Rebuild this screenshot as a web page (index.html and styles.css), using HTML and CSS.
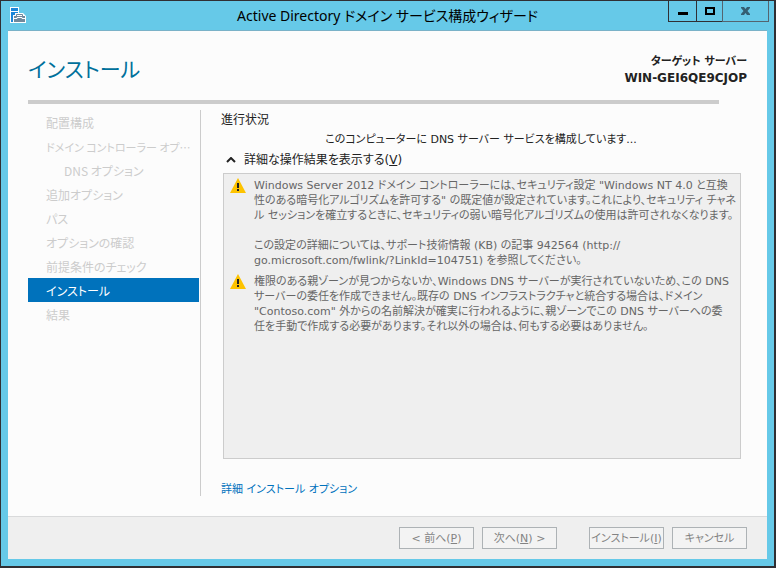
FILE: index.html
```html
<!doctype html>
<html lang="ja">
<head>
  <meta charset="utf-8">
  <title>Active Directory ドメイン サービス構成ウィザード</title>
  <link rel="stylesheet" href="styles.css">
</head>

<body>
  <div class="window">
    <header class="titlebar">
      <svg class="app-icon" width="16" height="16" viewBox="0 0 16 16">
        <path fill="#fff" d="M0 0h9v6h4l3 3v7H0z"/>
        <path fill="#1c86d8" d="M1 1h7v3H1zM1 5h7v1H5v2H3v7H1z"/>
        <path fill="#71899c" d="M4 9h11v6H4z"/>
        <path fill="none" stroke="#71899c" d="M6.500 9V7.500h6V9"/>
        <path fill="none" stroke="#fff" d="M4 11.500h3v-1h5v1h3"/>
      </svg>
      <h1 class="title">Active Directory ドメイン サービス構成ウィザード</h1>
      <div class="controls">
        <button class="control" aria-label="最小化">
          <svg width="10" height="10"><path d="M0 6h10v3H0z"/></svg>
        </button>
        <button class="control max" aria-label="最大化">
          <svg width="10" height="10"><path fill="none" stroke="#000" stroke-width="2" d="M1 2h8v6H1z"/></svg>
        </button>
        <button class="control close" aria-label="閉じる">
          <svg width="9" height="8"><path fill="#345f73" d="M0 0h3l1.500 2L6 0h3v1L6.500 4 9 7v1H6L4.500 6 3 8H0V7l2.500-3L0 1z"/></svg>
        </button>
      </div>
    </header>

    <div class="client">
      <div class="heading">
        <h2>インストール</h2>
        <div class="target">ターゲット サーバー<br><span class="server">WIN-GEI6QE9CJOP</span></div>
      </div>
      <div class="rule"></div>

      <div class="body">
        <nav class="steps">
          <ul>
            <li>配置構成</li>
            <li class="long">ドメイン コントローラー オプ…</li>
            <li class="sub">DNS オプション</li>
            <li>追加オプション</li>
            <li>パス</li>
            <li>オプションの確認</li>
            <li>前提条件のチェック</li>
            <li class="current">インストール</li>
            <li>結果</li>
          </ul>
        </nav>

        <main class="progress">
          <h3>進行状況</h3>
          <p class="status">このコンピューターに DNS サーバー サービスを構成しています...</p>
          <button class="toggle">
            <svg width="10" height="6" viewBox="0 0 10 6"><path fill="none" stroke="#222" stroke-width="2" d="M1 5l4-4 4 4"/></svg>
            <span>詳細な操作結果を表示する(<u>V</u>)</span>
          </button>

          <div class="results">
            <div class="message">
              <svg class="warning" width="16" height="16" viewBox="0 0 16 16">
                <path fill="#fdc300" d="M8 0l8 15H0z"/>
                <path fill="#222" d="M7 5h2v5H7zM7 11h2v2H7z"/>
              </svg>
              <p>Windows Server 2012 ドメイン コントローラーには、セキュリティ設定 "Windows NT 4.0 と互換<br>
              性のある暗号化アルゴリズムを許可する" の既定値が設定されています。これにより、セキュリティ チャネ<br>
              ル セッションを確立するときに、セキュリティの弱い暗号化アルゴリズムの使用は許可されなくなります。<br>
              <br>
              この設定の詳細については、サポート技術情報 (KB) の記事 942564 (http://<br>
              go.microsoft.com/fwlink/?LinkId=104751) を参照してください。</p>
            </div>
            <div class="message">
              <svg class="warning" width="16" height="16" viewBox="0 0 16 16">
                <path fill="#fdc300" d="M8 0l8 15H0z"/>
                <path fill="#222" d="M7 5h2v5H7zM7 11h2v2H7z"/>
              </svg>
              <p>権限のある親ゾーンが見つからないか、Windows DNS サーバーが実行されていないため、この DNS<br>
              サーバーの委任を作成できません。既存の DNS インフラストラクチャと統合する場合は、ドメイン<br>
              "Contoso.com" 外からの名前解決が確実に行われるように、親ゾーンでこの DNS サーバーへの委<br>
              任を手動で作成する必要があります。それ以外の場合は、何もする必要はありません。</p>
            </div>
          </div>

          <a class="more" href="#">詳細 インストール オプション</a>
        </main>
      </div>

      <footer class="buttons">
        <button disabled>&lt; 前へ(<u>P</u>)</button>
        <button disabled>次へ(<u>N</u>) &gt;</button>
        <button class="install" disabled>インストール(<u>I</u>)</button>
        <button disabled>キャンセル</button>
      </footer>
    </div>
  </div>
</body>

</html>
```

FILE: styles.css
```css
* {
  box-sizing: border-box;
}
body {
  margin: 0;
  font-family: "DejaVu Sans", "Noto Sans CJK JP", sans-serif;
  font-feature-settings: "palt";
  font-size: 11px;
  line-height: 16px;
  color: #222;
}
h1, h2, h3, p, ul {
  margin: 0;
  padding: 0;
  font-size: inherit;
  font-weight: normal;
}
button {
  font: inherit;
  font-feature-settings: inherit;
  color: inherit;
  padding: 0;
}
svg {
  display: block;
  flex: none;
}

.window {
  display: flex;
  flex-direction: column;
  min-height: 100vh;
  padding: 0 7px 7px;
  background: #66c9e8;
  border: 1px solid #302f33;
  border-right-width: 2px;
  border-bottom-width: 2px;
}

/* title bar */
.titlebar {
  display: grid;
  grid-template-columns: 100px 1fr 100px;
  height: 29px;
}
.app-icon {
  margin: 6px 0 0 2px;
}
.title {
  font-family: "Noto Sans", "Noto Sans CJK JP", sans-serif;
  font-size: 14px;
  line-height: 30px;
  text-align: center;
  color: #000;
  white-space: nowrap;
}
.controls {
  display: flex;
  justify-content: flex-end;
  height: 21px;
  margin-right: -2px;
}
.control {
  display: flex;
  align-items: center;
  justify-content: center;
  width: 28px;
  background: none;
  border: 1px solid #302f33;
  border-top: none;
  border-right: none;
}
.control.max {
  width: 26px;
}
.control.close {
  width: 47px;
  border-color: #54646f;
  border-right: 1px solid #54646f;
}

/* wizard page */
.client {
  display: flex;
  flex-direction: column;
  flex: 1;
  background: #fcfcfc;
  border-top: 1px solid #7ab2c8;
}
.heading {
  display: flex;
  justify-content: space-between;
  padding: 20px 20px 0;
  height: 69px;
}
.heading h2 {
  font-size: 21px;
  line-height: 38px;
  color: #00709b;
}
.target {
  padding-top: 3px;
  font-weight: bold;
  text-align: right;
}
.server {
  font-size: 12px;
}
.rule {
  height: 4px;
  margin: 0 48px 0 20px;
  background: #ccc;
}
.body {
  display: flex;
  flex: 1;
  padding: 6px 26px 20px 20px;
}

.steps {
  flex: none;
  width: 173px;
  padding-right: 1px;
  border-right: 1px solid #ccc;
}
.steps ul {
  list-style: none;
}
.steps li {
  height: 24px;
  padding-left: 18px;
  font-family: "Noto Sans CJK JP", sans-serif;
  font-size: 12px;
  line-height: 26px;
  color: #ccc;
  white-space: nowrap;
}
.steps .long {
  font-size: 11px;
}
.steps .sub {
  padding-left: 36px;
}
.steps .current {
  background: #0072bc;
  color: #fff;
}

.progress {
  display: flex;
  flex-direction: column;
  flex: 1;
  min-width: 0;
  padding: 2px 0 0 20px;
}
.progress h3 {
  font-size: 12px;
}
.status {
  padding-top: 4px;
  text-align: center;
}
.toggle {
  display: flex;
  align-items: center;
  gap: 8px;
  margin: 4px 0 5px;
  padding-left: 5px;
  background: none;
  border: none;
  font-size: 12px;
}
.results {
  flex: 1;
  margin-left: 2px;
  padding: 4px 6px;
  background: #efefef;
  border: 1px solid #ccc;
  color: #666;
  white-space: nowrap;
}
.message {
  display: flex;
  gap: 8px;
  line-height: 15px;
  margin-bottom: 6px;
}
.more {
  align-self: flex-start;
  height: 14px;
  margin-top: 23px;
  color: #0072bc;
  text-decoration: none;
}

/* bottom buttons */
.buttons {
  display: flex;
  justify-content: flex-end;
  gap: 8px;
  padding: 10px 20px;
  background: #efefef;
  border-top: 1px solid #d9dadb;
}
.buttons button {
  width: 75px;
  height: 22px;
  padding-top: 2px;
  background: #f3f3f3;
  border: 1px solid #adb2b5;
  color: #838383;
  white-space: nowrap;
}
.buttons .install {
  margin-left: 24px;
}
```
